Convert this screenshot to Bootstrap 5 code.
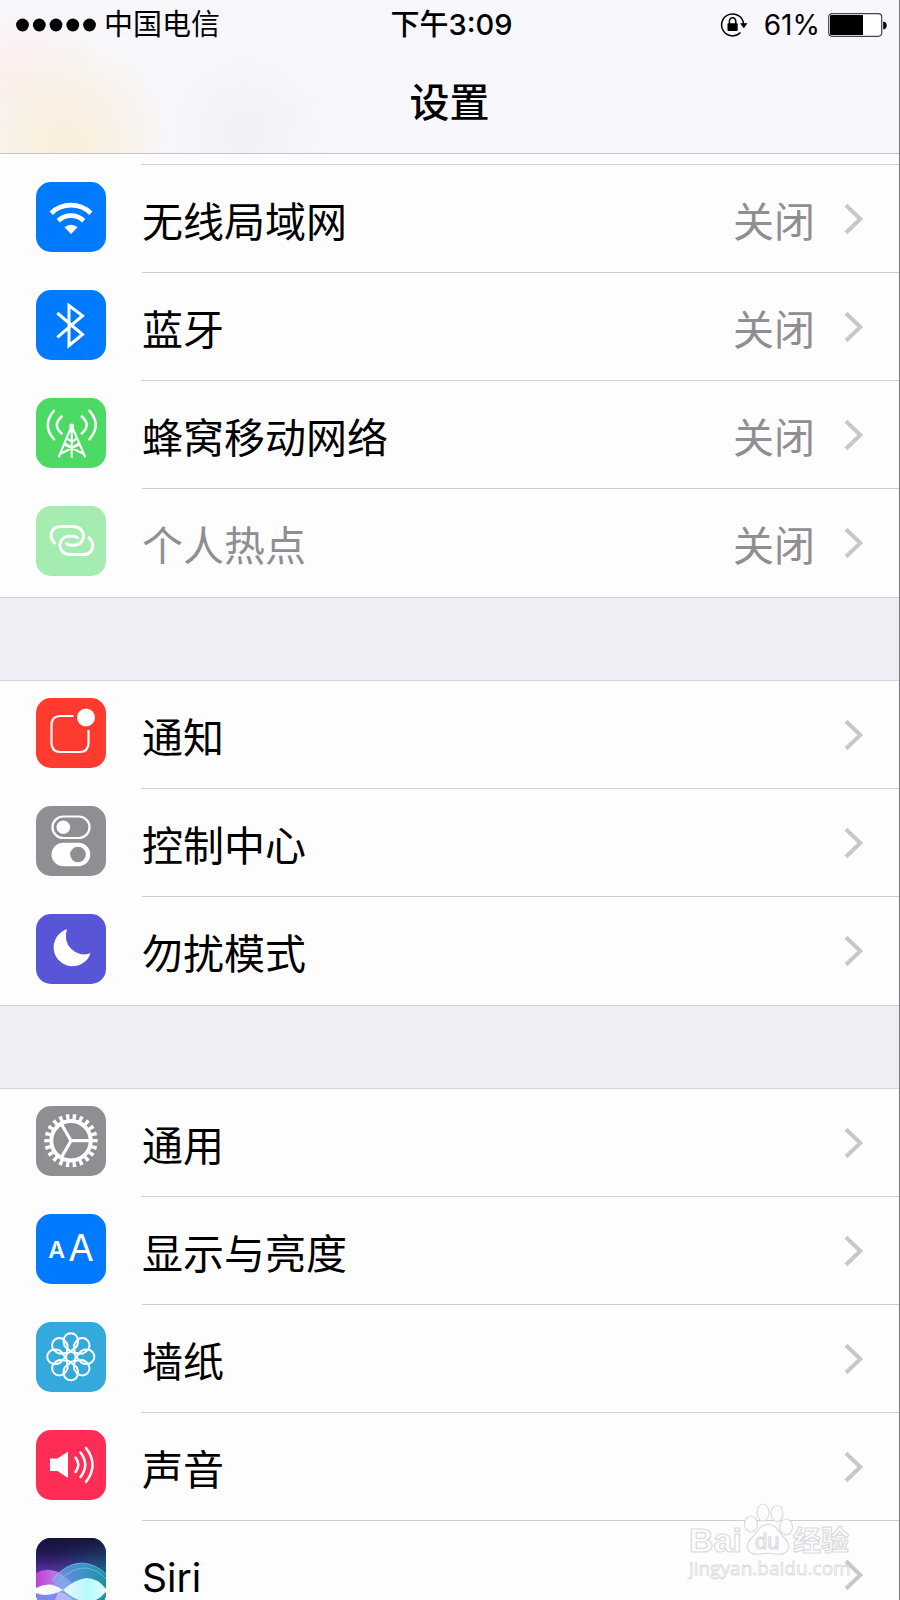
<!DOCTYPE html>
<html lang="zh-CN">
<head>
<meta charset="utf-8">
<meta name="viewport" content="width=device-width, initial-scale=1">
<title>设置</title>
<link href="https://cdn.jsdelivr.net/npm/bootstrap@5.3.0/dist/css/bootstrap.min.css" rel="stylesheet">
<style>
  body { font-family: Inter, "Noto Sans CJK SC", sans-serif; color: #000; background: #fefdfe; }
  .phone { border-right: 1px solid #77767a; }
  .top-bar {
    border-bottom: 1px solid #c4c3c7;
    background:
      radial-gradient(ellipse 110px 110px at 64px 140px, #f9eedb 0%, #f9eedb99 50%, transparent 100%),
      radial-gradient(ellipse 90px 70px at 0 68px, #fdeff0 0%, transparent 100%),
      radial-gradient(ellipse 90px 90px at 245px 130px, #f1f0f4 0%, transparent 100%),
      #f8f7fb;
  }
  .status-row { height: 50px; font-size: 29px; line-height: 48px; padding: 0 12px 0 16px; }
  .status-row .clock { font-weight: 500; }
  .percent { font-size: 28px; }
  .page-title { font-size: 40px; line-height: 56px; font-weight: 500; padding: 25px 0 22px; }
  .scroll-area { scrollbar-width: none; }
  .list-start { height: 11px; margin-left: 142px; border-bottom: 1px solid #cfced2; }
  .setting { height: 108px; padding-left: 36px; color: #000; font-size: 41px; line-height: 44px; }
  .setting:hover { color: #000; }
  .tile { width: 70px; height: 70px; margin-bottom: 5px; }
  .setting-body { margin-left: 36px; padding-right: 35px; border-bottom: 1px solid #cfced2; }
  .setting:last-child .setting-body { border-bottom-color: transparent; }
  .setting-label { padding-top: 6px; }
  .setting-label[lang="en"] { font-size: 39px; }
  .state { color: #8e8e93; padding-top: 6px; margin-right: 29px; }
  .setting.off, .setting.off:hover { color: #8e8e93; }
  .group-gap { height: 84px; background: #efeef4; border-top: 1px solid #cfced2; border-bottom: 1px solid #d6d5d9; }
  .stamp { right: 46px; bottom: 10px; width: 168px; height: 92px; pointer-events: none; }
</style>
</head>
<body>
<div class="phone vh-100 d-flex flex-column overflow-hidden position-relative">
  <header class="top-bar flex-shrink-0">
    <div class="status-row row g-0 align-items-center">
      <div class="col d-flex align-items-center gap-2">
        <svg width="80" height="14" viewBox="0 0 80 14" aria-hidden="true"><circle cx="6.500" cy="7" r="6.400"/><circle cx="23.300" cy="7" r="6.400"/><circle cx="40" cy="7" r="6.400"/><circle cx="56.800" cy="7" r="6.400"/><circle cx="73.500" cy="7" r="6.400"/></svg>
        <span>中国电信</span>
      </div>
      <div class="col-auto clock">下午3:09</div>
      <div class="col d-flex align-items-center justify-content-end">
        <svg class="me-3" width="28" height="26" viewBox="0 0 28 26" fill="none" stroke="#000" stroke-width="1.500" aria-hidden="true">
          <path d="M23.600 12.500A11 11 0 1 0 20.500 20.600"/>
          <path d="M20 11.200h7.500l-3.700 5z" fill="#000" stroke="none"/>
          <path d="M9.400 12V9.500a3.200 3.800 0 0 1 6.400 0V12"/>
          <rect x="7.500" y="11.200" width="10.200" height="7.800" rx="1" fill="#000" stroke="none"/>
        </svg>
        <span class="percent me-2">61%</span>
        <svg width="59" height="26" viewBox="0 0 59 26" aria-hidden="true">
          <rect x=".7" y="1.700" width="53" height="22.600" rx="3.500" fill="#fff" stroke="#444" stroke-width="1.200"/>
          <path d="M3.500 3H35V23H3.500Q2 23 2 21.500V4.500Q2 3 3.500 3z"/>
          <path d="M55.200 9.500q3.500.5 3.500 4t-3.500 4z"/>
        </svg>
      </div>
    </div>
    <h1 class="page-title text-center m-0">设置</h1>
  </header>

  <svg class="d-none" aria-hidden="true">
    <symbol id="chevron" viewBox="0 0 20 32"><path d="M2 2.200 16.300 16 2 29.800" fill="none" stroke="#c7c7cc" stroke-width="4"/></symbol>
  </svg>

  <main class="scroll-area flex-grow-1 overflow-auto">
    <div class="list-start"></div>
    <nav aria-label="网络">
      <a class="setting d-flex align-items-center text-decoration-none" href="#wifi">
        <svg class="tile flex-shrink-0" viewBox="0 0 70 70" aria-hidden="true"><rect width="70" height="70" rx="15" fill="#007aff"/><g fill="none" stroke="#fff" stroke-width="4.800"><path d="M15.200 31.200a28.500 28.500 0 0 1 39.600 0"/><path d="M22.300 38.800a18.300 18.300 0 0 1 25.400 0"/></g><path d="M35 52l-6.600-6.700a9.600 9.600 0 0 1 13.200 0z" fill="#fff"/></svg>
        <span class="setting-body d-flex align-items-center flex-grow-1 h-100"><span class="setting-label me-auto">无线局域网</span><span class="state">关闭</span><svg width="20" height="32"><use href="#chevron"/></svg></span>
      </a>
      <a class="setting d-flex align-items-center text-decoration-none" href="#bluetooth">
        <svg class="tile flex-shrink-0" viewBox="0 0 70 70" aria-hidden="true"><rect width="70" height="70" rx="15" fill="#007aff"/><path d="M21.300 23 46.500 44.500 33 55.500V15.500L46.500 25.700 21.300 47.300" fill="none" stroke="#fff" stroke-width="3"/></svg>
        <span class="setting-body d-flex align-items-center flex-grow-1 h-100"><span class="setting-label me-auto">蓝牙</span><span class="state">关闭</span><svg width="20" height="32"><use href="#chevron"/></svg></span>
      </a>
      <a class="setting d-flex align-items-center text-decoration-none" href="#cellular">
        <svg class="tile flex-shrink-0" viewBox="0 0 70 70" aria-hidden="true"><rect width="70" height="70" rx="15" fill="#4cd964"/><g fill="none" stroke="#fff" stroke-width="2.100" stroke-linecap="round"><path d="M35.700 28V59M34.800 30 23 58.500M36.600 30 49 58.500M31 40.500 36 44l4.700-3.500M28.500 46.500 47 55.500M43 46.500 25 55.500M29 45.500 36 50l6.500-4.500"/><path d="M25.700 18.500Q16 27 25.700 35.500M45.700 18.500Q55.500 27 45.700 35.500" stroke-width="2.500"/><path d="M18 12.700Q5.500 27 18 41.300M53.400 12.700Q66 27 53.400 41.300" stroke-width="2.500"/></g><circle cx="35.700" cy="28" r="2.500" fill="#fff"/></svg>
        <span class="setting-body d-flex align-items-center flex-grow-1 h-100"><span class="setting-label me-auto">蜂窝移动网络</span><span class="state">关闭</span><svg width="20" height="32"><use href="#chevron"/></svg></span>
      </a>
      <a class="setting off d-flex align-items-center text-decoration-none" href="#hotspot">
        <svg class="tile flex-shrink-0" viewBox="0 0 70 70" aria-hidden="true"><rect width="70" height="70" rx="15" fill="#a5ecb1"/><g fill="none" stroke="#fff" stroke-width="3"><path d="M19.500 38C12 31.500 14.500 20.500 25 20.500H37C50.500 20.500 51 39 38 39.200H35Q31.500 39 30 36.500"/><path d="M52 31C60 37 57.500 48.500 47 48.500H34C20.500 48.500 20.500 30.200 34 30.200H37.500Q41 30.500 42 33"/></g></svg>
        <span class="setting-body d-flex align-items-center flex-grow-1 h-100"><span class="setting-label me-auto">个人热点</span><span class="state">关闭</span><svg width="20" height="32"><use href="#chevron"/></svg></span>
      </a>
    </nav>
    <div class="group-gap"></div>
    <nav aria-label="通知与控制">
      <a class="setting d-flex align-items-center text-decoration-none" href="#notifications">
        <svg class="tile flex-shrink-0" viewBox="0 0 70 70" aria-hidden="true"><rect width="70" height="70" rx="15" fill="#ff3b30"/><path d="M37.500 18H24.500Q15.500 18 15.500 27V45Q15.500 54 24.500 54H43.500Q52.500 54 52.500 45V32" fill="none" stroke="#fff" stroke-width="2.200"/><circle cx="50" cy="19.500" r="9" fill="#fff"/></svg>
        <span class="setting-body d-flex align-items-center flex-grow-1 h-100"><span class="setting-label me-auto">通知</span><svg width="20" height="32"><use href="#chevron"/></svg></span>
      </a>
      <a class="setting d-flex align-items-center text-decoration-none" href="#control-center">
        <svg class="tile flex-shrink-0" viewBox="0 0 70 70" aria-hidden="true"><rect width="70" height="70" rx="15" fill="#8e8e93"/><rect x="16.500" y="10.500" width="37" height="21.500" rx="10.700" fill="none" stroke="#fff" stroke-width="2.200"/><circle cx="27.300" cy="21.200" r="6.800" fill="#fff"/><rect x="15.500" y="36.700" width="38.800" height="23.600" rx="11.800" fill="#fff"/><circle cx="42" cy="48.500" r="7.800" fill="#8e8e93"/></svg>
        <span class="setting-body d-flex align-items-center flex-grow-1 h-100"><span class="setting-label me-auto">控制中心</span><svg width="20" height="32"><use href="#chevron"/></svg></span>
      </a>
      <a class="setting d-flex align-items-center text-decoration-none" href="#do-not-disturb">
        <svg class="tile flex-shrink-0" viewBox="0 0 70 70" aria-hidden="true"><rect width="70" height="70" rx="15" fill="#5856d6"/><path d="M31 15.300A18.900 18.900 0 1 0 54.500 39.300A18.500 18.500 0 0 1 31 15.300z" fill="#fff"/></svg>
        <span class="setting-body d-flex align-items-center flex-grow-1 h-100"><span class="setting-label me-auto">勿扰模式</span><svg width="20" height="32"><use href="#chevron"/></svg></span>
      </a>
    </nav>
    <div class="group-gap"></div>
    <nav aria-label="设备">
      <a class="setting d-flex align-items-center text-decoration-none" href="#general">
        <svg class="tile flex-shrink-0" viewBox="0 0 70 70" aria-hidden="true"><rect width="70" height="70" rx="15" fill="#8e8e93"/><g fill="none" stroke="#fff" transform="translate(35 34.700)"><circle r="19.700" stroke-width="4"/><circle r="23.800" stroke-width="5.800" pathLength="220" stroke-dasharray="5 5" stroke-dashoffset="2.500"/><path d="M0 0H19M0 0L-9.500-16.500M0 0L-9.500 16.500" stroke-width="3.200"/></g></svg>
        <span class="setting-body d-flex align-items-center flex-grow-1 h-100"><span class="setting-label me-auto">通用</span><svg width="20" height="32"><use href="#chevron"/></svg></span>
      </a>
      <a class="setting d-flex align-items-center text-decoration-none" href="#display">
        <svg class="tile flex-shrink-0" viewBox="0 0 70 70" aria-hidden="true"><rect width="70" height="70" rx="15" fill="#007aff"/><g fill="#fff" font-family="Inter, sans-serif" text-anchor="middle"><text x="20.500" y="44" font-size="23" font-weight="600">A</text><text x="45" y="47" font-size="37" font-weight="400">A</text></g></svg>
        <span class="setting-body d-flex align-items-center flex-grow-1 h-100"><span class="setting-label me-auto">显示与亮度</span><svg width="20" height="32"><use href="#chevron"/></svg></span>
      </a>
      <a class="setting d-flex align-items-center text-decoration-none" href="#wallpaper">
        <svg class="tile flex-shrink-0" viewBox="0 0 70 70" aria-hidden="true"><defs><path id="petal" d="M-1.700-4.100 6-10.500Q7.200-13 7.200-16.300A7.200 7.200 0 0 0-7.200-16.300Q-7.200-13-6-10.500L1.700-4.100"/></defs><rect width="70" height="70" rx="15" fill="#34aadc"/><g fill="none" stroke="#fff" stroke-width="2" transform="translate(34.800 34.800)"><use href="#petal"/><use href="#petal" transform="rotate(45)"/><use href="#petal" transform="rotate(90)"/><use href="#petal" transform="rotate(135)"/><use href="#petal" transform="rotate(180)"/><use href="#petal" transform="rotate(225)"/><use href="#petal" transform="rotate(270)"/><use href="#petal" transform="rotate(315)"/></g></svg>
        <span class="setting-body d-flex align-items-center flex-grow-1 h-100"><span class="setting-label me-auto">墙纸</span><svg width="20" height="32"><use href="#chevron"/></svg></span>
      </a>
      <a class="setting d-flex align-items-center text-decoration-none" href="#sounds">
        <svg class="tile flex-shrink-0" viewBox="0 0 70 70" aria-hidden="true"><rect width="70" height="70" rx="15" fill="#ff2d55"/><path d="M14 28.500h7.500L32 21.500V48l-10.500-7H14z" fill="#fff"/><g fill="none" stroke="#fff" stroke-width="2.500" stroke-linecap="round"><path d="M39.500 27.500Q45 34.700 39.500 42"/><path d="M44.500 22.500Q54 34.700 44.500 47"/><path d="M50 18Q63 34.700 50 52"/></g></svg>
        <span class="setting-body d-flex align-items-center flex-grow-1 h-100"><span class="setting-label me-auto">声音</span><svg width="20" height="32"><use href="#chevron"/></svg></span>
      </a>
      <a class="setting d-flex align-items-center text-decoration-none" href="#siri">
        <svg class="tile flex-shrink-0" viewBox="0 0 70 70" aria-hidden="true">
          <defs>
            <linearGradient id="night" x1="0" y1="0" x2="0" y2="1"><stop offset="0" stop-color="#1b1245"/><stop offset=".2" stop-color="#2a1a60"/><stop offset=".5" stop-color="#55329c"/><stop offset="1" stop-color="#3d5fc0"/></linearGradient>
            <linearGradient id="teal" x1="0" y1="0" x2="1" y2="0"><stop offset=".2" stop-color="#1d5a86" stop-opacity="0"/><stop offset="1" stop-color="#14607a" stop-opacity=".8"/></linearGradient>
            <linearGradient id="fade" x1="0" y1="0" x2="0" y2="1"><stop offset="0" stop-color="#17123f"/><stop offset=".4" stop-color="#1b1548" stop-opacity="0"/></linearGradient>
            <linearGradient id="pink" x1="0" y1="0" x2="1" y2="0"><stop offset="0" stop-color="#d43fe0"/><stop offset=".55" stop-color="#c9a8f4"/><stop offset="1" stop-color="#7f9bf0"/></linearGradient>
            <linearGradient id="sea" x1="0" y1="0" x2="1" y2="0"><stop offset="0" stop-color="#8aa4f4"/><stop offset=".55" stop-color="#49b2e8"/><stop offset="1" stop-color="#1fa8ac"/></linearGradient>
            <linearGradient id="glow" x1="0" y1="0" x2="1" y2="0"><stop offset="0" stop-color="#fff"/><stop offset=".4" stop-color="#e8f4ff"/><stop offset=".75" stop-color="#b4fbfb"/><stop offset="1" stop-color="#e8ffff"/></linearGradient>
            <clipPath id="tile-shape"><rect width="70" height="70" rx="15"/></clipPath>
          </defs>
          <g clip-path="url(#tile-shape)">
            <rect width="70" height="70" fill="url(#night)"/>
            <rect width="70" height="70" fill="url(#teal)"/>
            <rect width="70" height="70" fill="url(#fade)"/>
            <path d="M0 35Q14 27 28 38T54 70H0z" fill="url(#pink)" opacity=".85"/>
            <path d="M16 42Q30 25 46 25Q60 26 70 36V70H16Q28 54 16 42z" fill="url(#sea)" opacity=".7"/>
            <path d="M16 42Q30 25 46 25Q60 26 70 36M22 44Q36 29 50 30Q62 32 70 41" fill="none" stroke="#5fd9ee" stroke-width="1" opacity=".7"/>
            <path d="M0 54Q22 46 38 70H0z" fill="#7f86ee"/>
            <path d="M22 54Q34 56 44 70H16z" fill="#b4b8fa"/>
            <path d="M0 50Q14 42 27 52Q38 42 50 40Q62 40 70 51V54Q60 65 50 64Q38 62 27 52Q12 60 0 55z" fill="url(#glow)"/>
          </g>
        </svg>
        <span class="setting-body d-flex align-items-center flex-grow-1 h-100"><span class="setting-label me-auto" lang="en">Siri</span><svg width="20" height="32"><use href="#chevron"/></svg></span>
      </a>
    </nav>
  </main>

  <svg class="stamp position-absolute" viewBox="0 0 168 92" fill="#fefdfe" stroke="#dbdade" stroke-width="1.200" font-family="'Liberation Sans', 'Noto Sans CJK SC', sans-serif">
    <text x="4" y="54" font-size="34" font-weight="700">Bai</text>
    <ellipse cx="66" cy="26" rx="6.500" ry="8"/><ellipse cx="78" cy="14.500" rx="6" ry="8.500"/><ellipse cx="92" cy="15.500" rx="6" ry="8"/><ellipse cx="101" cy="29" rx="6.500" ry="8"/>
    <path d="M83 26.500C93 26.500 93 35 100 40.500C108 49 102 58 91 56Q83 54.500 75 56C64 58 58 49 66 40.500C73 35 73 26.500 83 26.500z"/>
    <text x="70" y="51" font-size="22">du</text>
    <text x="108" y="53" font-size="28" font-weight="700">经验</text>
    <text x="4" y="77" font-size="19" stroke-width=".8" font-family="'Open Sans', sans-serif">jingyan.baidu.com</text>
  </svg>
</div>
<script src="https://cdn.jsdelivr.net/npm/bootstrap@5.3.0/dist/js/bootstrap.bundle.min.js"></script>
</body>
</html>
